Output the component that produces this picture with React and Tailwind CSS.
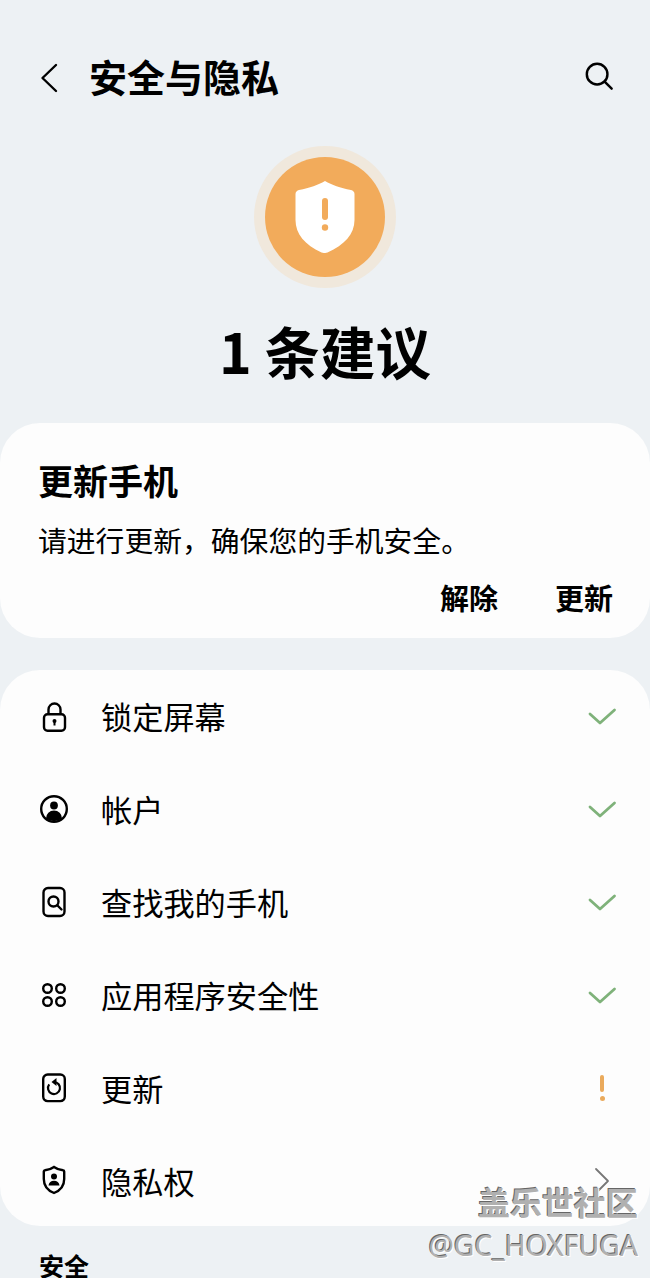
const FONT = "font-['Noto_Sans_CJK_SC','Noto_Sans',sans-serif]";

const LockIcon = () => (
  <svg width="30" height="32" viewBox="0 -1.500 30 32" fill="none" stroke="#000" strokeWidth="2.400">
    <rect x="5" y="12.700" width="21" height="16.600" rx="3.500" />
    <path d="M9.500 12.700V8a6 6 0 0 1 12 0v4.700" />
    <circle cx="15.500" cy="19.500" r="2" fill="#000" stroke="none" />
    <path d="M15.500 20v4" strokeWidth="2" />
  </svg>
);

const AccountIcon = () => (
  <svg width="30" height="30" viewBox="0 0 30 30" fill="none">
    <circle cx="15" cy="15" r="12.800" stroke="#000" strokeWidth="2.400" />
    <circle cx="15" cy="11.500" r="3.900" fill="#000" />
    <path d="M7 24.500a8 8 0 0 1 16 0A12 12 0 0 1 15 27a12 12 0 0 1-8-2.500z" fill="#000" />
  </svg>
);

const FindIcon = () => (
  <svg width="30" height="32" viewBox="0 0 30 32" fill="none" stroke="#000" strokeWidth="2.400">
    <rect x="4.500" y="2" width="21" height="28" rx="4.500" />
    <circle cx="14.500" cy="15.500" r="5" />
    <path d="M18.500 19.500l4 4" strokeLinecap="round" />
  </svg>
);

const AppsIcon = () => (
  <svg width="30" height="30" viewBox="0 0 30 30" fill="none" stroke="#000" strokeWidth="2.400">
    <circle cx="8.500" cy="8.500" r="4.300" />
    <circle cx="21.500" cy="8.500" r="4.300" />
    <circle cx="8.500" cy="21.500" r="4.300" />
    <circle cx="21.500" cy="21.500" r="4.300" />
  </svg>
);

const UpdateIcon = () => (
  <svg width="30" height="32" viewBox="0 0 30 32" fill="none" stroke="#000" strokeWidth="2.400">
    <rect x="4.200" y="2.500" width="21.600" height="26.600" rx="4.500" />
    <path d="M10.200 12.400a6 6 0 1 0 4.800-2.400" strokeWidth="2.200" />
    <path d="M17.500 6v8l-5-4z" fill="#000" stroke="none" />
  </svg>
);

const PrivacyIcon = () => (
  <svg width="30" height="32" viewBox="0 1 30 32" fill="none">
    <path d="M15 3c3 2.200 6 3 9 3.300.7 0 1.200.6 1.200 1.300V15c0 6.500-3.900 11.500-10.200 14C8.700 26.500 4.800 21.500 4.800 15V7.600c0-.7.500-1.300 1.200-1.300C9 6 12 5.200 15 3z" stroke="#000" strokeWidth="2.400" />
    <circle cx="15" cy="12.500" r="3" fill="#000" />
    <path d="M9.500 21.500c.3-3 2.500-4.700 5.500-4.700s5.200 1.700 5.500 4.700z" fill="#000" />
  </svg>
);

const Check = () => (
  <svg className="mt-[4px]" width="30" height="22" viewBox="0 0 30 22" fill="none" stroke="#7fb27a" strokeWidth="2.800" strokeLinecap="round" strokeLinejoin="round">
    <path d="M3 7l10 9L27.500 3" />
  </svg>
);

const Warn = () => (
  <div className="flex flex-col items-center gap-[4px]">
    <div className="h-[17px] w-[4px] rounded-full bg-[#eaaa5c]" />
    <div className="h-[5px] w-[5px] rounded-full bg-[#eaaa5c]" />
  </div>
);

const Chevron = () => (
  <svg width="18" height="28" viewBox="0 0 18 28" fill="none" stroke="#777" strokeWidth="1.800" strokeLinecap="round" strokeLinejoin="round">
    <path d="M3 2l12 12L3 26" />
  </svg>
);

const rows = [
  { icon: <LockIcon />, label: "锁定屏幕", status: <Check /> },
  { icon: <AccountIcon />, label: "帐户", status: <Check /> },
  { icon: <FindIcon />, label: "查找我的手机", status: <Check /> },
  { icon: <AppsIcon />, label: "应用程序安全性", status: <Check /> },
  { icon: <UpdateIcon />, label: "更新", status: <Warn /> },
  { icon: <PrivacyIcon />, label: "隐私权", status: <Chevron /> },
];

export default function App() {
  return (
    <div className={`relative h-[1278px] w-[650px] overflow-hidden bg-[#edf1f4] text-black ${FONT}`}>
      {/* header */}
      <div className="mt-[54px] flex h-[48px] items-center justify-between pl-[38px] pr-[36px]">
        <div className="flex items-center gap-[29px]">
          <svg className="mb-[1px]" width="22" height="32" viewBox="0 0 22 32" fill="none" stroke="#000" strokeWidth="2.400" strokeLinecap="round" strokeLinejoin="round">
            <path d="M18 3L4.500 16 18 29" />
          </svg>
          <h1 className="mb-[4px] text-[38px] font-bold leading-[48px]">安全与隐私</h1>
        </div>
        <svg className="mb-[5px]" width="30" height="30" viewBox="0 0 32 32" fill="none" stroke="#000" strokeWidth="2.600" strokeLinecap="round">
          <circle cx="14" cy="14" r="11" />
          <path d="M22 22l7.500 7.500" />
        </svg>
      </div>

      {/* status */}
      <div className="mt-[44px] flex flex-col items-center">
        <div className="flex h-[142px] w-[142px] items-center justify-center rounded-full bg-[#f0e8dc]">
          <div className="flex h-[120px] w-[120px] items-center justify-center rounded-full bg-[#f2ab5b]">
            <svg width="60" height="72" viewBox="0 0 60 72" fill="none">
              <path d="M30 0c7 4 15 7 26 9 2 .4 3.500 2 3.500 4v26c0 14-10 25-27 32.500-2 .7-4 .7-6 0C10 64 .5 53 .5 39V13c0-2 1.500-3.600 3.500-4C15 7 23 4 30 0z" fill="#fff" />
              <rect x="27" y="17" width="6" height="22" rx="3" fill="#f2ab5b" />
              <circle cx="30" cy="46.500" r="3.200" fill="#f2ab5b" />
            </svg>
          </div>
        </div>
        <div className="mt-[24px] text-[55.500px] font-bold leading-[76px]">1 条建议</div>
      </div>

      {/* suggestion card */}
      <div className="mt-[35px] h-[215px] rounded-[40px] bg-[#fdfdfd] pl-[38px] pr-[37px] pt-[32px]">
        <div className="text-[35px] font-bold leading-[50px]">更新手机</div>
        <p className="mt-[14px] text-[28.800px] leading-[42px]">请进行更新，确保您的手机安全。</p>
        <div className="mt-[15px] flex justify-end gap-[57px] text-[29px] font-bold leading-[42px]">
          <span>解除</span>
          <span>更新</span>
        </div>
      </div>

      {/* checks list */}
      <div className="mt-[32px] h-[556px] rounded-[40px] bg-[#fdfdfd] pt-[1px]">
        {rows.map((row) => (
          <div key={row.label} className="flex h-[93px] items-center pl-[39px]">
            <div className="flex w-[30px] justify-center pb-[3px]">{row.icon}</div>
            <span className="ml-[32px] flex-1 pb-[3px] text-[31.200px] leading-[44px]">{row.label}</span>
            <div className="mr-[33px] flex w-[30px] justify-center pb-[3px]">{row.status}</div>
          </div>
        ))}
      </div>

      <div className="mt-[21px] pl-[39px] text-[25px] font-bold leading-[36px]">安全</div>

      {/* watermark */}
      <div className="absolute bottom-[14px] right-[12px] flex flex-col items-end text-[#b0b0b0] [text-shadow:1px_1px_0_#fff,-1px_-1px_0_#666]">
        <span className="mb-[4px] text-[32px] font-bold leading-[42px]">盖乐世社区</span>
        <span className="font-['Noto_Sans',sans-serif] text-[28.300px] leading-[38px]">@GC_HOXFUGA</span>
      </div>
    </div>
  );
}
